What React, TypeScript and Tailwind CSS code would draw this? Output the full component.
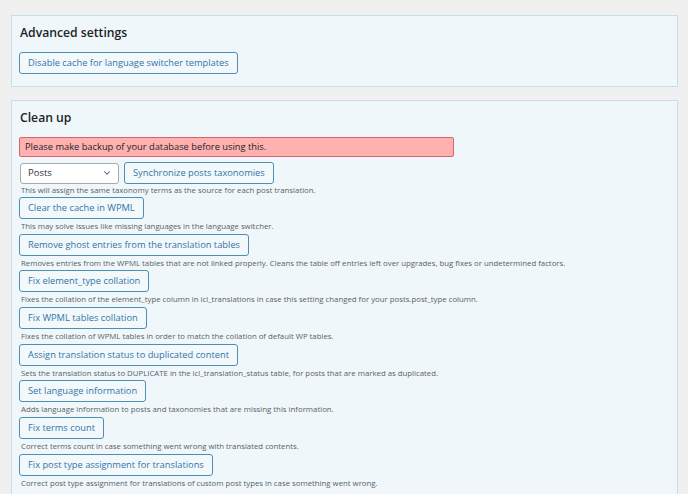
import { ChevronDown } from "lucide-react";

const rows = [
  {
    label: "Clear the cache in WPML",
    desc: "This may solve issues like missing languages in the language switcher.",
  },
  {
    label: "Remove ghost entries from the translation tables",
    desc: "Removes entries from the WPML tables that are not linked properly. Cleans the table off entries left over upgrades, bug fixes or undetermined factors.",
  },
  {
    label: "Fix element_type collation",
    desc: "Fixes the collation of the element_type column in icl_translations in case this setting changed for your posts.post_type column.",
  },
  {
    label: "Fix WPML tables collation",
    desc: "Fixes the collation of WPML tables in order to match the collation of default WP tables.",
  },
  {
    label: "Assign translation status to duplicated content",
    desc: "Sets the translation status to DUPLICATE in the icl_translation_status table, for posts that are marked as duplicated.",
  },
  {
    label: "Set language information",
    desc: "Adds language information to posts and taxonomies that are missing this information.",
  },
  {
    label: "Fix terms count",
    desc: "Correct terms count in case something went wrong with translated contents.",
  },
  {
    label: "Fix post type assignment for translations",
    desc: "Correct post type assignment for translations of custom post types in case something went wrong.",
  },
];

function WpButton({ children }: { children: React.ReactNode }) {
  return (
    <button
      type="button"
      className="block h-[22px] rounded-[3px] border border-[#4e8fb6] bg-[#f3f8fa] px-[8px] text-[9.3px] leading-[20px] text-[#2f76ab] whitespace-nowrap"
    >
      {children}
    </button>
  );
}

function Desc({ children }: { children: React.ReactNode }) {
  return (
    <p className="h-[14.7px] pl-[2px] text-[7.8px] leading-[14px] text-[#5b6166] whitespace-nowrap">
      {children}
    </p>
  );
}

export default function App() {
  return (
    <div
      className="min-h-screen bg-[#f0f0f1] pt-[15px] pl-[11px] pr-[10px]"
      style={{ fontFamily: '"Open Sans", "Noto Sans", sans-serif' }}
    >
      {/* Advanced settings */}
      <div className="border border-[#c5dfe8] bg-[#eff7fa] px-[7px] pb-[12px]">
        <h2 className="pt-[7px] pl-[1px] text-[12.2px] leading-[20px] font-semibold text-[#1d2327] mb-[9px]">
          Advanced settings
        </h2>
        <WpButton>Disable cache for language switcher templates</WpButton>
      </div>

      {/* Clean up */}
      <div className="mt-[13px] border border-[#c5dfe8] bg-[#eff7fa] px-[7px] pb-[20px]">
        <h2 className="pt-[7px] pl-[1px] text-[12.2px] leading-[20px] font-semibold text-[#1d2327] mb-[9px]">
          Clean up
        </h2>
        <div className="w-[435px] h-[20px] rounded-[2px] border border-[#d5646e] bg-[#ffb1b1] pl-[5px] text-[9.3px] leading-[18px] text-[#1d2327]">
          Please make backup of your database before using this.
        </div>

        <div className="mt-[5px] flex items-center gap-[5px]">
          <div className="ml-[1px] flex h-[21px] w-[99px] items-center justify-between rounded-[3px] border border-[#a7aaad] bg-white pl-[7px] pr-[6px] text-[9.5px] text-[#2c3338]">
            <span>Posts</span>
            <ChevronDown className="size-[10px] text-[#50575e]" strokeWidth={2.5} />
          </div>
          <WpButton>Synchronize posts taxonomies</WpButton>
        </div>
        <p className="h-[13px] pl-[2px] text-[7.8px] leading-[12px] text-[#5b6166] whitespace-nowrap">
          This will assign the same taxonomy terms as the source for each post translation.
        </p>

        {rows.map((r) => (
          <div key={r.label}>
            <WpButton>{r.label}</WpButton>
            <Desc>{r.desc}</Desc>
          </div>
        ))}
      </div>
    </div>
  );
}
